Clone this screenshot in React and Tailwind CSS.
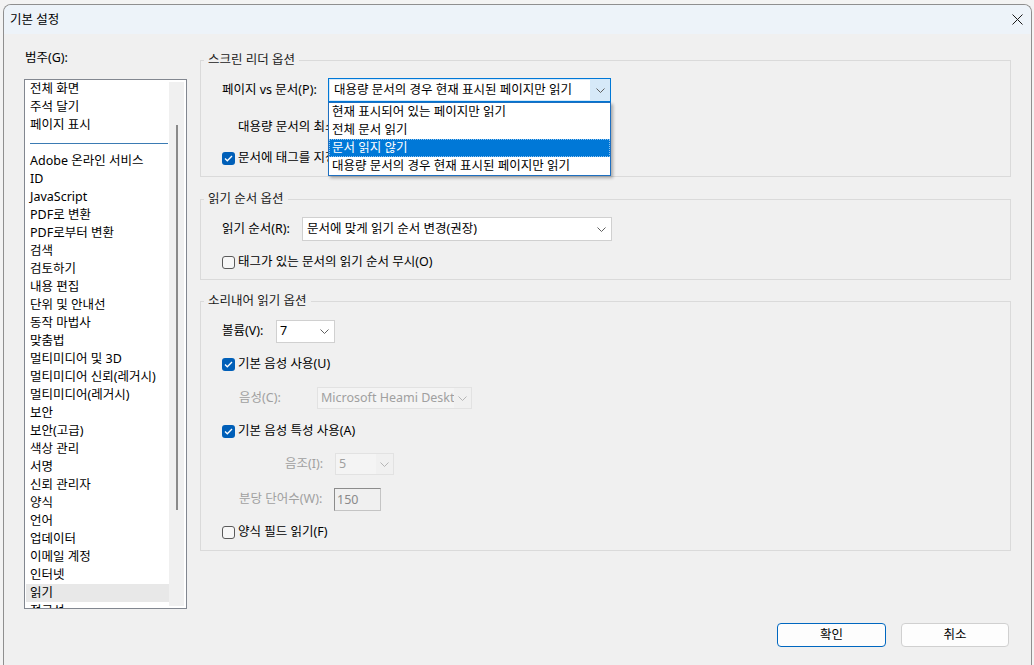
import React from "react";

const categories = [
  "Adobe 온라인 서비스",
  "ID",
  "JavaScript",
  "PDF로 변환",
  "PDF로부터 변환",
  "검색",
  "검토하기",
  "내용 편집",
  "단위 및 안내선",
  "동작 마법사",
  "맞춤법",
  "멀티미디어 및 3D",
  "멀티미디어 신뢰(레거시)",
  "멀티미디어(레거시)",
  "보안",
  "보안(고급)",
  "색상 관리",
  "서명",
  "신뢰 관리자",
  "양식",
  "언어",
  "업데이터",
  "이메일 계정",
  "인터넷",
  "읽기",
  "접근성",
];

const pageOptions = [
  "현재 표시되어 있는 페이지만 읽기",
  "전체 문서 읽기",
  "문서 읽지 않기",
  "대용량 문서의 경우 현재 표시된 페이지만 읽기",
];

function Chevron({ color = "#5f5f5f" }) {
  return (
    <svg width="9" height="5" viewBox="0 0 9 5" fill="none">
      <polyline points="0.5,0.5 4.5,4.5 8.5,0.5" stroke={color} strokeWidth="1" />
    </svg>
  );
}

function Checkbox({ checked, label, clip }) {
  return (
    <div className="flex items-center h-[18px]">
      {checked ? (
        <div className="w-[13px] h-[13px] shrink-0 rounded-[3px] bg-[#005fb8] flex items-center justify-center">
          <svg width="9" height="7" viewBox="0 0 9 7" fill="none">
            <polyline points="1,3.5 3.3,5.8 8,1" stroke="#ffffff" strokeWidth="1.3" />
          </svg>
        </div>
      ) : (
        <div className="w-[13px] h-[13px] shrink-0 rounded-[3px] border border-[#5a5a5a] bg-[#f7f7f7]"></div>
      )}
      <span className={"ml-[3px] leading-[18px] whitespace-nowrap " + (clip || "")}>{label}</span>
    </div>
  );
}

function Group({ title, children, className }) {
  return (
    <fieldset className={"border border-[#dadada] min-w-0 " + (className || "")}>
      <legend className="ml-[3px] px-[4px] leading-[18px] text-[#1a1a1a]">{title}</legend>
      <div className="pl-[21px]">{children}</div>
    </fieldset>
  );
}

export default function App() {
  return (
    <div className="w-[1034px] h-[665px] bg-[#f3f3f3] overflow-hidden text-[12.5px] text-black font-['Noto_Sans','Noto_Sans_CJK_KR',sans-serif]">
      <div className="ml-[3px] mt-[4px] w-[1029px] h-[661px] border border-b-0 border-[#8f8f8f] rounded-t-[8px] bg-[#f0f0f0] flex flex-col overflow-hidden">
        {/* title bar */}
        <div className="h-[29px] bg-[#edf3f9] flex items-center justify-between pl-[6px] pr-[8px]">
          <span className="leading-[18px]">기본 설정</span>
          <svg width="11" height="11" viewBox="0 0 11 11" fill="none">
            <path d="M0.5 0.5 L10.5 10.5 M10.5 0.5 L0.5 10.5" stroke="#1a1a1a" strokeWidth="1" />
          </svg>
        </div>

        <div className="flex-1 flex flex-col px-[20px]">
          <div className="flex gap-[13px]">
            {/* left column */}
            <div className="w-[163px] pt-[15px]">
              <div className="leading-[18px] pl-[1px]">범주(G):</div>
              <div className="mt-[12px] h-[530px] border border-[#828790] bg-white flex overflow-hidden">
                <div className="w-[144px] h-full overflow-hidden">
                  {["전체 화면", "주석 달기", "페이지 표시"].map((c) => (
                    <div key={c} className="h-[18px] leading-[18px] pl-[5px] whitespace-nowrap">
                      {c}
                    </div>
                  ))}
                  <div className="h-[18px] flex items-center pl-[5px] pr-[1px]">
                    <div className="w-full h-[1px] bg-[#3b7bb3]"></div>
                  </div>
                  {categories.map((c) => (
                    <div
                      key={c}
                      className={
                        "h-[18px] leading-[18px] pl-[4px] ml-[1px] whitespace-nowrap " +
                        (c === "읽기" ? "bg-[#e8e8e8]" : "")
                      }
                    >
                      {c}
                    </div>
                  ))}
                </div>
                <div className="w-[15px] my-[2px] bg-[#f0f0f0] flex justify-center">
                  <div className="w-[2px] h-[385px] mt-[43px] bg-[#8a8a8a]"></div>
                </div>
              </div>
            </div>

            {/* right column */}
            <div className="flex-1 pt-[17px] flex flex-col">
              <Group title="스크린 리더 옵션">
                <div className="pt-[9px] pb-[9px]">
                  <div className="flex items-center h-[24px]">
                    <span className="w-[106px] whitespace-nowrap">페이지 vs 문서(P):</span>
                    <div className="relative w-[283px] h-[24px]">
                      <div className="w-full h-full border border-[#0078d7] bg-[#d6e9f8] flex items-center">
                        <div className="w-[260px] h-[20px] ml-[1px] bg-white pl-[4px] leading-[20px] whitespace-nowrap overflow-hidden">
                          대용량 문서의 경우 현재 표시된 페이지만 읽기
                        </div>
                        <div className="flex-1 flex justify-center">
                          <Chevron />
                        </div>
                      </div>
                      <div className="absolute left-0 top-full w-full border border-[#1e6fc0] bg-white shadow-[2px_2px_3px_rgba(0,0,0,0.3)] z-10">
                        {pageOptions.map((o) => (
                          <div
                            key={o}
                            className={
                              "h-[18px] leading-[16px] pl-[2px] whitespace-nowrap border " +
                              (o === "문서 읽지 않기"
                                ? "bg-[#0078d7] text-white border-dotted border-[#8fc3ef]"
                                : "border-transparent")
                            }
                          >
                            {o}
                          </div>
                        ))}
                      </div>
                    </div>
                  </div>
                  <div className="mt-[16px] h-[18px] leading-[18px] ml-[16px] w-[90px] overflow-hidden whitespace-nowrap">
                    대용량 문서의 최소 페이지 수(M):
                  </div>
                  <div className="mt-[13px]">
                    <Checkbox
                      checked
                      clip="w-[90px] overflow-hidden"
                      label="문서에 태그를 지정하지 않은 경우 읽기 순서 추론(I)"
                    />
                  </div>
                </div>
              </Group>

              <Group title="읽기 순서 옵션" className="mt-[13px]">
                <div className="pt-[9px] pb-[8px]">
                  <div className="flex items-center h-[24px]">
                    <span className="w-[80px] whitespace-nowrap">읽기 순서(R):</span>
                    <div className="w-[310px] h-[24px] border border-[#d0d0d0] bg-white flex items-center justify-between pl-[4px] pr-[5px]">
                      <span className="whitespace-nowrap">문서에 맞게 읽기 순서 변경(권장)</span>
                      <Chevron />
                    </div>
                  </div>
                  <div className="mt-[12px]">
                    <Checkbox label="태그가 있는 문서의 읽기 순서 무시(O)" />
                  </div>
                </div>
              </Group>

              <Group title="소리내어 읽기 옵션" className="mt-[12px]">
                <div className="pt-[10px] pb-[9px]">
                  <div className="flex items-center h-[23px]">
                    <span className="w-[54px] whitespace-nowrap">볼륨(V):</span>
                    <div className="w-[59px] h-[23px] border border-[#d0d0d0] bg-white flex items-center justify-between pl-[3px] pr-[5px]">
                      <span>7</span>
                      <Chevron />
                    </div>
                  </div>
                  <div className="mt-[12px]">
                    <Checkbox checked label="기본 음성 사용(U)" />
                  </div>
                  <div className="mt-[14px] flex items-center h-[22px] pl-[17px] text-[#a0a0a0]">
                    <span className="w-[78px] whitespace-nowrap">음성(C):</span>
                    <div className="w-[155px] h-[22px] border border-[#e2e2e2] bg-[#f0f0f0] flex items-center">
                      <div className="w-[136px] h-full bg-[#f4f4f4] pl-[3px] leading-[20px] whitespace-nowrap overflow-hidden">
                        Microsoft Heami Desktop - Korean
                      </div>
                      <div className="flex-1 flex justify-center">
                        <Chevron color="#b5b5b5" />
                      </div>
                    </div>
                  </div>
                  <div className="mt-[13px]">
                    <Checkbox checked label="기본 음성 특성 사용(A)" />
                  </div>
                  <div className="mt-[13px] flex items-center h-[22px] pl-[63px] text-[#a0a0a0]">
                    <span className="w-[50px] whitespace-nowrap">음조(I):</span>
                    <div className="w-[59px] h-[22px] border border-[#e2e2e2] bg-[#f0f0f0] flex items-center">
                      <div className="w-[40px] h-full bg-[#f4f4f4] pl-[3px] leading-[20px]">5</div>
                      <div className="flex-1 flex justify-center">
                        <Chevron color="#b5b5b5" />
                      </div>
                    </div>
                  </div>
                  <div className="mt-[13px] flex items-center h-[23px] pl-[17px] text-[#a0a0a0]">
                    <span className="w-[95px] whitespace-nowrap">분당 단어수(W):</span>
                    <div className="w-[47px] h-[23px] border border-[#c4c4c4] border-t-[#8c8c8c] border-l-[#8c8c8c] bg-[#f0f0f0] pl-[2px] leading-[21px] text-[#8a8a8a]">
                      150
                    </div>
                  </div>
                  <div className="mt-[12px]">
                    <Checkbox label="양식 필드 읽기(F)" />
                  </div>
                </div>
              </Group>
            </div>
          </div>

          {/* buttons */}
          <div className="mt-[14px] mr-[2px] flex justify-end gap-[15px]">
            <button className="w-[109px] h-[24px] rounded-[4px] border border-[#0067c0] bg-[#fdfdfd] leading-[22px]">
              확인
            </button>
            <button className="w-[108px] h-[24px] rounded-[4px] border border-[#d0d0d0] bg-[#fdfdfd] leading-[22px]">
              취소
            </button>
          </div>
        </div>
      </div>
    </div>
  );
}
